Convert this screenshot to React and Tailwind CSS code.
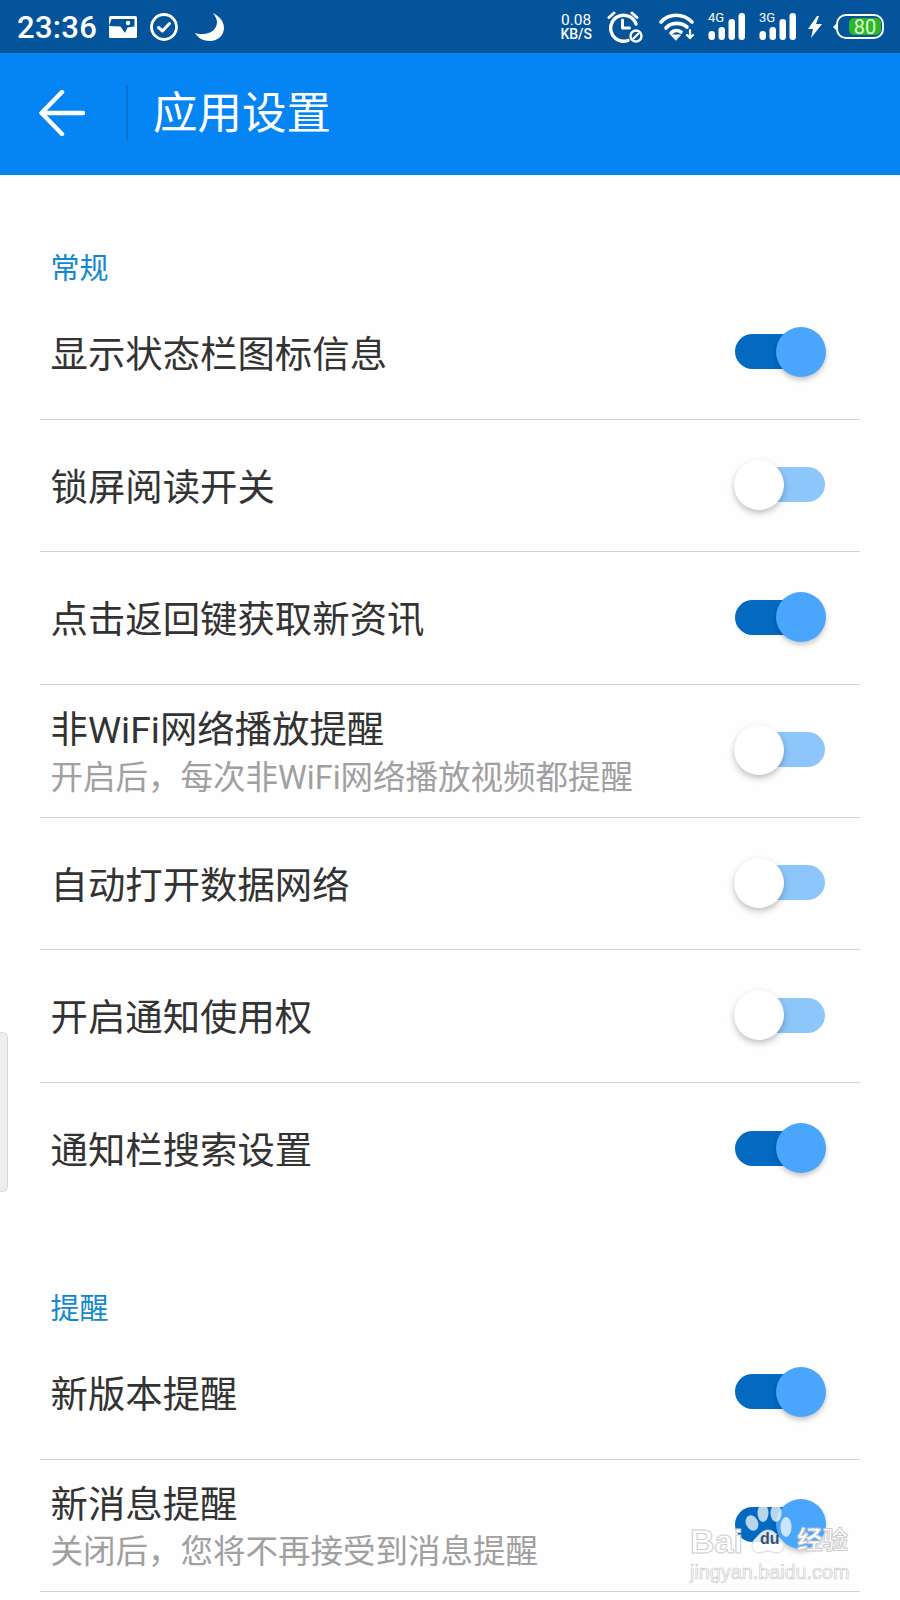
const font = { fontFamily: '"Roboto","Noto Sans CJK SC",sans-serif' };

function Toggle({ on }) {
  return (
    <div className="relative w-[92px] h-[50px] shrink-0 mt-[-2px] mr-[1px]">
      {on ? (
        <>
          <div className="absolute left-[1px] top-[7.5px] w-[70px] h-[35px] rounded-full bg-[#0369c1]" />
          <div className="absolute left-[42px] top-0 w-[50px] h-[50px] rounded-full bg-[#4aa6fd] shadow-[0_3px_5px_rgba(0,0,0,0.22)]" />
        </>
      ) : (
        <>
          <div className="absolute left-[22px] top-[7.5px] w-[69px] h-[35px] rounded-full bg-[#8dc6fa]" />
          <div className="absolute left-0 top-0 w-[50px] h-[50px] rounded-full bg-white shadow-[0_3px_6px_rgba(0,0,0,0.25)]" />
        </>
      )}
    </div>
  );
}

function Row({ title, sub, on }) {
  return (
    <div className="h-[132.7px] border-b border-[#d2d2d2] flex items-center justify-between pl-[10.5px] pr-[33px]">
      <div className="flex flex-col">
        <div className={sub ? "text-[37.4px] leading-[44px] text-[#333333] mt-[4.5px]" : "text-[37.4px] leading-[44px] text-[#333333] mt-[4px]"}>{title}</div>
        {sub && <div className="text-[32.5px] leading-[40px] text-[#a0a0a0] mt-[5.5px]">{sub}</div>}
      </div>
      <Toggle on={on} />
    </div>
  );
}

function Signal({ label }) {
  return (
    <div className="relative w-[37px] h-[27px]">
      <span className="absolute left-0 top-[-2px] text-[13px] leading-[14px] text-white">{label}</span>
      <svg width="37" height="27" viewBox="0 0 37 27" className="absolute left-0 top-0">
        <g fill="#fff">
          <rect x="0.5" y="18" width="6.5" height="9" rx="3.2" />
          <rect x="10.5" y="14" width="6.5" height="13" rx="3.2" />
          <rect x="20.5" y="6" width="6.5" height="21" rx="3.2" />
          <rect x="30.5" y="0" width="6.5" height="27" rx="3.2" />
        </g>
      </svg>
    </div>
  );
}

function StatusBar() {
  return (
    <div className="h-[53px] bg-[#03549b] flex items-center justify-between pl-[17px] pr-[16px] text-white">
      <div className="flex items-center">
        <span className="text-[31px] leading-[53px] font-medium tracking-[0.3px] mt-[1px]">23:36</span>
        <svg width="28" height="22" viewBox="0 0 28 22" className="ml-[12px]">
          <rect width="28" height="22" rx="1.5" fill="#fff" />
          <path d="M2.5 3h23v7.5l-7 1-2.5 5.5-4.5-6.5-11.5-.5z" fill="#03549b" />
          <circle cx="19" cy="7" r="2.2" fill="#fff" />
        </svg>
        <svg width="28" height="28" viewBox="0 0 28 28" className="ml-[13px]">
          <circle cx="14" cy="14" r="12.5" fill="none" stroke="#fff" strokeWidth="2.8" />
          <path d="M8.5 14.5l4 3.5 7-7.5" fill="none" stroke="#fff" strokeWidth="3" strokeLinecap="round" strokeLinejoin="round" />
        </svg>
        <svg width="29" height="28" viewBox="0 0 29 28" className="ml-[17px]">
          <path d="M18 0c6 3 11 8 11 15 0 7-6 13-14 13C8 28 3 25 0 20c2 1 5 1 8 1 8 0 14-5 14-12 0-3-2-6-4-9z" fill="#fff" />
        </svg>
      </div>
      <div className="flex items-center">
        <div className="flex flex-col items-center mr-[15px]">
          <span className="text-[15.5px] leading-[14px]">0.08</span>
          <span className="text-[14px] leading-[13px] font-medium mt-[1px]">KB/S</span>
        </div>
        <svg width="36" height="32" viewBox="0 0 36 32" fill="none" stroke="#fff" className="mr-[16px]">
          <path d="M21 29.5A13 13 0 1 1 29 13" strokeWidth="3.4" strokeLinecap="round" />
          <path d="M15.5 9v8h7" strokeWidth="3" strokeLinecap="round" strokeLinejoin="round" />
          <path d="M2 6.5L7 2M25 2l5 4.5" strokeWidth="3" strokeLinecap="round" />
          <circle cx="29" cy="25" r="5.5" strokeWidth="2.4" />
          <path d="M26 28l6-6" strokeWidth="2.2" />
        </svg>
        <svg width="36" height="28" viewBox="0 0 36 28" fill="none" stroke="#fff" strokeWidth="3.6" strokeLinecap="round" className="mr-[13px]">
          <path d="M2 9C10 0 24 0 33 9" />
          <path d="M7 15C12 9 22 9 28 14" />
          <path d="M12 20c3-3 7-3 10 -1" />
          <path d="M12.5 22h9l-4.5 5z" fill="#fff" strokeWidth="1" stroke="#fff" />
          <path d="M31 17v7M28 22l3 3 3-3" strokeWidth="2.2" />
        </svg>
        <Signal label="4G" />
        <div className="w-[14px]" />
        <Signal label="3G" />
        <svg width="14" height="22" viewBox="0 0 14 22" className="ml-[12px]">
          <path d="M9 0L0 13h5L3 22l11-14H8l3-8z" fill="#fff" />
        </svg>
        <div className="relative ml-[11px] w-[51px] h-[25px]">
          <svg width="4" height="8" viewBox="0 0 4 8" className="absolute left-0 top-[8.5px]">
            <path d="M4 0L0 4l4 4z" fill="#fff" />
          </svg>
          <div className="absolute left-[3px] top-0 w-[48px] h-[25px] rounded-[10px] border-[2px] border-white" />
          <div className="absolute left-[16px] top-[4px] w-[32px] h-[17px] rounded-[5px] bg-[#2fb52a] flex items-center justify-center text-[20px] leading-none text-[#dcffd0]">80</div>
        </div>
      </div>
    </div>
  );
}

function Header() {
  return (
    <div className="h-[122px] bg-[#0584f4] flex items-center pl-[39px]">
      <svg width="46" height="46" viewBox="0 0 46 46" fill="none" stroke="#fff" strokeWidth="4.4" strokeLinecap="round" strokeLinejoin="round" className="mt-[-2px]">
        <path d="M44 23H3" />
        <path d="M23 2L2.5 23 23 44" />
      </svg>
      <div className="w-[2px] h-[55px] bg-[#0a6fd0] ml-[41px] mt-[-3px]" />
      <div className="text-[44.5px] leading-none text-white ml-[25px] mt-[1px]">应用设置</div>
    </div>
  );
}

function Label({ children, className }) {
  return <div className={"pl-[10.5px] text-[29px] leading-[36px] text-[#1288cf] " + className}>{children}</div>;
}

function Watermark() {
  return (
    <div className="absolute left-[690px] top-[1503px] w-[170px] h-[82px] pointer-events-none" style={{ fontFamily: '"Liberation Sans","Noto Sans CJK SC",sans-serif' }}>
      <span className="absolute left-0 top-[19px] text-[34px] leading-[38px] font-bold text-white [-webkit-text-stroke:1px_#cccccc]">Bai</span>
      <span className="absolute left-[107px] top-[21px] text-[25.5px] leading-[32px] font-bold text-white [-webkit-text-stroke:1px_#cccccc]">经验</span>
      <span className="absolute left-0 top-[57px] text-[19.8px] leading-[24px] text-white [-webkit-text-stroke:0.7px_#cccccc] whitespace-nowrap">jingyan.baidu.com</span>
      <svg width="57" height="52" viewBox="0 0 57 52" className="absolute left-[45px] top-0">
        <g fill="#ffffff" fillOpacity="0.72">
          <ellipse cx="17" cy="20" rx="6" ry="8" transform="rotate(-25 17 20)" />
          <ellipse cx="28" cy="10" rx="5.5" ry="9" />
          <ellipse cx="41" cy="10" rx="5.5" ry="9" />
          <ellipse cx="51" cy="24" rx="5.5" ry="10" />
        </g>
        <path d="M33 27c6 0 9 5 14 10 4 5 2 13-5 13-3 0-6-2-9-2s-6 2-9 2c-7 0-9-8-5-13 5-5 8-10 14-10z" fill="#ffffff" fillOpacity="0.85" stroke="#cccccc" strokeWidth="0.8" />
      </svg>
      <span className="absolute left-[70px] top-[26px] text-[16px] leading-[20px] font-bold text-[#3a4f70]">du</span>
    </div>
  );
}

export default function App() {
  return (
    <div className="relative w-[900px] h-[1600px] overflow-hidden bg-[#fefefe]" style={font}>
      <StatusBar />
      <Header />
      <div className="pl-[40px] pr-[40px]">
        <Label className="pt-[76px]">常规</Label>
        <Row title="显示状态栏图标信息" on />
        <Row title="锁屏阅读开关" />
        <Row title="点击返回键获取新资讯" on />
        <Row title="非WiFi网络播放提醒" sub="开启后，每次非WiFi网络播放视频都提醒" />
        <Row title="自动打开数据网络" />
        <Row title="开启通知使用权" />
        <div className="[&>div]:border-b-0"><Row title="通知栏搜索设置" on /></div>
        <Label className="pt-[75px]">提醒</Label>
        <Row title="新版本提醒" on />
        <Row title="新消息提醒" sub="关闭后，您将不再接受到消息提醒" on />
      </div>
      <div className="absolute left-0 top-[1032px] w-[8px] h-[160px] bg-[#efeff1] border border-l-0 border-[#d6d6d8] rounded-r-[6px]" />
      <Watermark />
    </div>
  );
}
